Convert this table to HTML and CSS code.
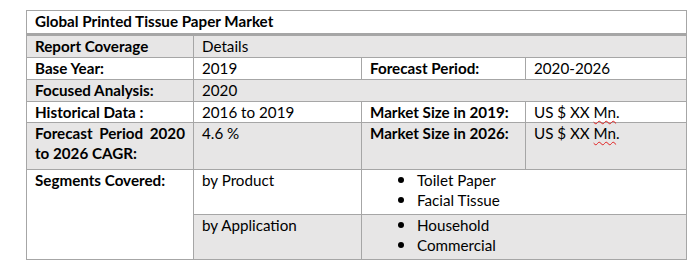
FILE: index.html
```html
<!DOCTYPE html>
<html>
<head>
<meta charset="utf-8">
<link rel="stylesheet" href="styles.css">
</head>
<body>
<table class="report">
  <colgroup>
    <col class="c1"><col class="c2"><col class="c3"><col class="c4">
  </colgroup>
  <tr class="title-row"><th colspan="4">Global Printed Tissue Paper Market</th></tr>
  <tr class="shade h22"><td class="b">Report Coverage</td><td colspan="3">Details</td></tr>
  <tr class="h22"><td class="b">Base Year:</td><td>2019</td><td class="b">Forecast Period:</td><td>2020-2026</td></tr>
  <tr class="shade h22"><td class="b">Focused Analysis:</td><td colspan="3">2020</td></tr>
  <tr class="h20"><td class="b">Historical Data :</td><td>2016 to 2019</td><td class="b">Market Size in 2019:</td><td>US $ XX <span class="sq">Mn</span>.</td></tr>
  <tr class="shade tall"><td class="b just">Forecast Period 2020 to 2026 CAGR:</td><td>4.6 %</td><td class="b">Market Size in 2026:</td><td>US $ XX <span class="sq">Mn</span>.</td></tr>
  <tr class="seg"><td class="b" rowspan="2">Segments Covered:</td><td>by Product</td><td colspan="2"><ul><li>Toilet Paper</li><li>Facial Tissue</li></ul></td></tr>
  <tr class="shade seg"><td>by Application</td><td colspan="2"><ul><li>Household</li><li>Commercial</li></ul></td></tr>
</table>
</body>
</html>
```
FILE: styles.css
```css
html, body { margin: 0; background: #fff; }
body { padding: 10px 0 0 26px; font-family: Lato, "Open Sans", sans-serif; font-size: 15.2px; color: #000; }
.report { border-collapse: collapse; table-layout: fixed; width: 660px; }
.c1 { width: 167px; } .c2 { width: 168px; } .c3 { width: 164px; } .c4 { width: 161px; }
.report th, .report td { border: 1px solid #a6a6a6; padding: 0 8px; vertical-align: top; line-height: 20px; text-align: left; }
.report th { font-weight: 700; height: 22px; border-bottom: 3px solid #a6a6a6; }
.b { font-weight: 700; }
.shade td { background: #e7e6e6; }
.h22 td { height: 21px; }
.h20 td { height: 18px; }
.tall td { height: 46px; }
.seg td { height: 44px; }
.just { text-align: justify !important; }
.sq { text-decoration: underline wavy #e02020; text-decoration-thickness: 1px; text-underline-offset: 2px; }
ul { margin: 0; padding: 0 0 0 47px; list-style: none; }
li { position: relative; padding-left: 0; }
li::before { content: ""; position: absolute; left: -19px; top: 7px; width: 6px; height: 6px; border-radius: 50%; background: #000; }
```
